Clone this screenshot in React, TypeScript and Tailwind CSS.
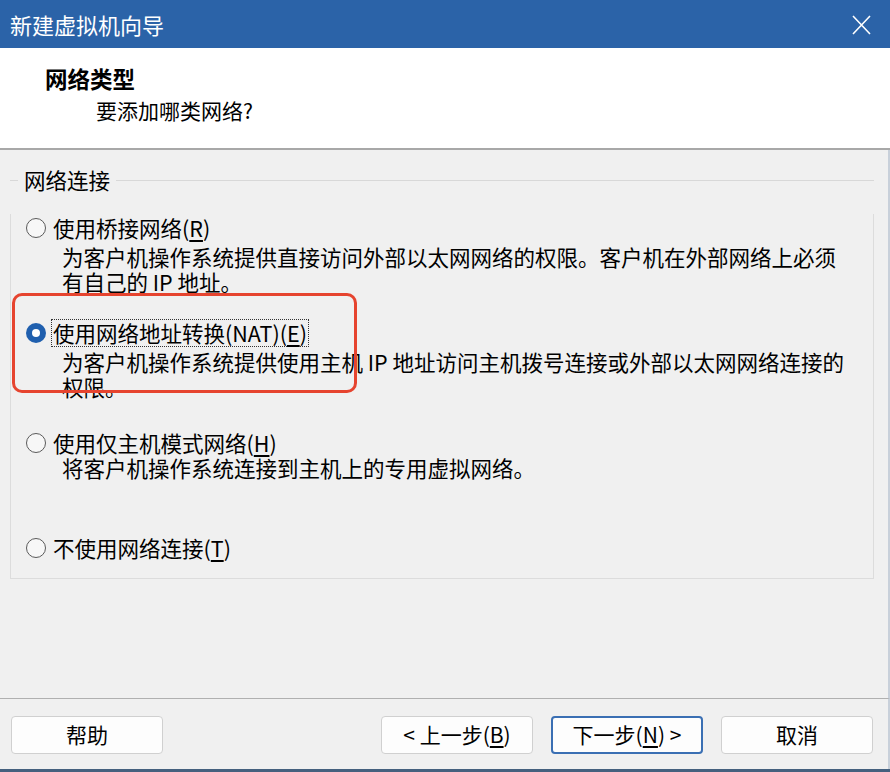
import React from "react";

const FONT = { fontFamily: '"Noto Sans CJK SC", "Noto Sans", sans-serif' };

function Radio({ checked }: { checked?: boolean }) {
  if (checked) {
    return (
      <span className="flex h-[20px] w-[20px] shrink-0 items-center justify-center rounded-full bg-[#1f5fae]">
        <span className="h-[8px] w-[8px] rounded-full bg-white" />
      </span>
    );
  }
  return <span className="h-[20px] w-[20px] shrink-0 rounded-full border border-[#5a5a5a] bg-[#f7f7f7]" />;
}

function Option({
  label,
  accel,
  suffix,
  checked,
  focused,
  desc,
  mt,
  descMt,
}: {
  label: string;
  accel: string;
  suffix?: string;
  checked?: boolean;
  focused?: boolean;
  desc?: string[];
  mt: string;
  descMt?: string;
}) {
  return (
    <div className={mt}>
      <div className="flex h-[28px] items-center gap-[5px] pl-[15px]">
        <Radio checked={checked} />
        <span
          className={
            "border px-[1px] text-[21.5px] leading-[26px] whitespace-nowrap " +
            (focused ? "border-dotted border-[#333]" : "border-transparent")
          }
        >
          {label}
          {suffix}(<u className="underline-offset-[3px]">{accel}</u>)
        </span>
      </div>
      {desc && (
        <div className={"pl-[51px] text-[21.5px] leading-[25px] " + (descMt ?? "")}>
          {desc.map((l, i) => (
            <div key={i} className="whitespace-nowrap">
              {l}
            </div>
          ))}
        </div>
      )}
    </div>
  );
}

function Btn({ children, primary }: { children: React.ReactNode; primary?: boolean }) {
  return (
    <div
      className={
        "flex h-[38px] w-[152px] items-center justify-center rounded-[4px] bg-[#fdfdfd] text-[21px] text-black " +
        (primary ? "border-2 border-[#3a6fb3]" : "border border-[#d0d0d0]")
      }
    >
      {children}
    </div>
  );
}

export default function App() {
  return (
    <div style={FONT} className="relative flex h-[772px] w-[890px] flex-col overflow-hidden bg-[#f0f0f0] text-black">
      {/* Title bar */}
      <div className="flex h-[48px] shrink-0 items-center justify-between bg-[#2b63a8] pl-[10px] pr-[19px]">
        <span className="text-[22px] leading-none text-white">新建虚拟机向导</span>
        <svg width="19" height="20" viewBox="0 0 19 20" className="mt-[1px]">
          <path d="M1 1 L18 19 M18 1 L1 19" stroke="white" strokeWidth="1.6" fill="none" />
        </svg>
      </div>

      {/* Header */}
      <div className="h-[102px] shrink-0 border-b-2 border-[#a8a8a8] bg-white pt-[16px]">
        <div className="pl-[45px] text-[22.5px] font-bold leading-[28px]">网络类型</div>
        <div className="mt-[4px] pl-[96px] text-[21px] leading-[28px]">要添加哪类网络?</div>
      </div>

      {/* Body */}
      <div className="flex flex-1 flex-col border-r-2 border-[#c8d0da] pt-[17px]">
        <div className="mx-[10px] mr-[14px]">
          <div className="flex h-[26px] items-center">
            <span className="h-px w-[8px] bg-[#d8d8d8]" />
            <span className="px-[6px] text-[21.5px] leading-[26px]">网络连接</span>
            <span className="h-px flex-1 bg-[#d8d8d8]" />
          </div>
          <div className="border-x border-b border-[#dcdcdc] pb-[16px]">
            <Option
              label="使用桥接网络"
              accel="R"
              mt="mt-[21px]"
              descMt="mt-[2px]"
              desc={[
                "为客户机操作系统提供直接访问外部以太网网络的权限。客户机在外部网络上必须",
                "有自己的 IP 地址。",
              ]}
            />
            <Option
              label="使用网络地址转换"
              suffix="(NAT)"
              accel="E"
              checked
              focused
              mt="mt-[25px]"
              descMt="mt-[2px]"
              desc={[
                "为客户机操作系统提供使用主机 IP 地址访问主机拨号连接或外部以太网网络连接的",
                "权限。",
              ]}
            />
            <Option
              label="使用仅主机模式网络"
              accel="H"
              mt="mt-[30px]"
              descMt="mt-[-2px]"
              desc={["将客户机操作系统连接到主机上的专用虚拟网络。"]}
            />
            <Option label="不使用网络连接" accel="T" mt="mt-[54px]" />
          </div>
        </div>
      </div>

      {/* Footer */}
      <div className="h-[71px] shrink-0 border-t border-r-2 border-t-[#b0b0b0] border-r-[#c8d0da] pl-[11px] pr-[15px] pt-[17px]">
        <div className="flex items-center">
          <Btn>帮助</Btn>
          <div className="flex-1" />
          <div className="flex gap-[18px]">
            <Btn>
              &lt; 上一步(<u className="underline-offset-[3px]">B</u>)
            </Btn>
            <Btn primary>
              下一步(<u className="underline-offset-[3px]">N</u>) &gt;
            </Btn>
            <Btn>取消</Btn>
          </div>
        </div>
      </div>
      <div className="h-[3px] shrink-0 bg-[#45607e]" />

      {/* Annotation */}
      <div className="pointer-events-none absolute left-[12px] top-[293px] h-[100px] w-[345px] rounded-[10px] border-[3px] border-[#e6442f]" />
    </div>
  );
}
